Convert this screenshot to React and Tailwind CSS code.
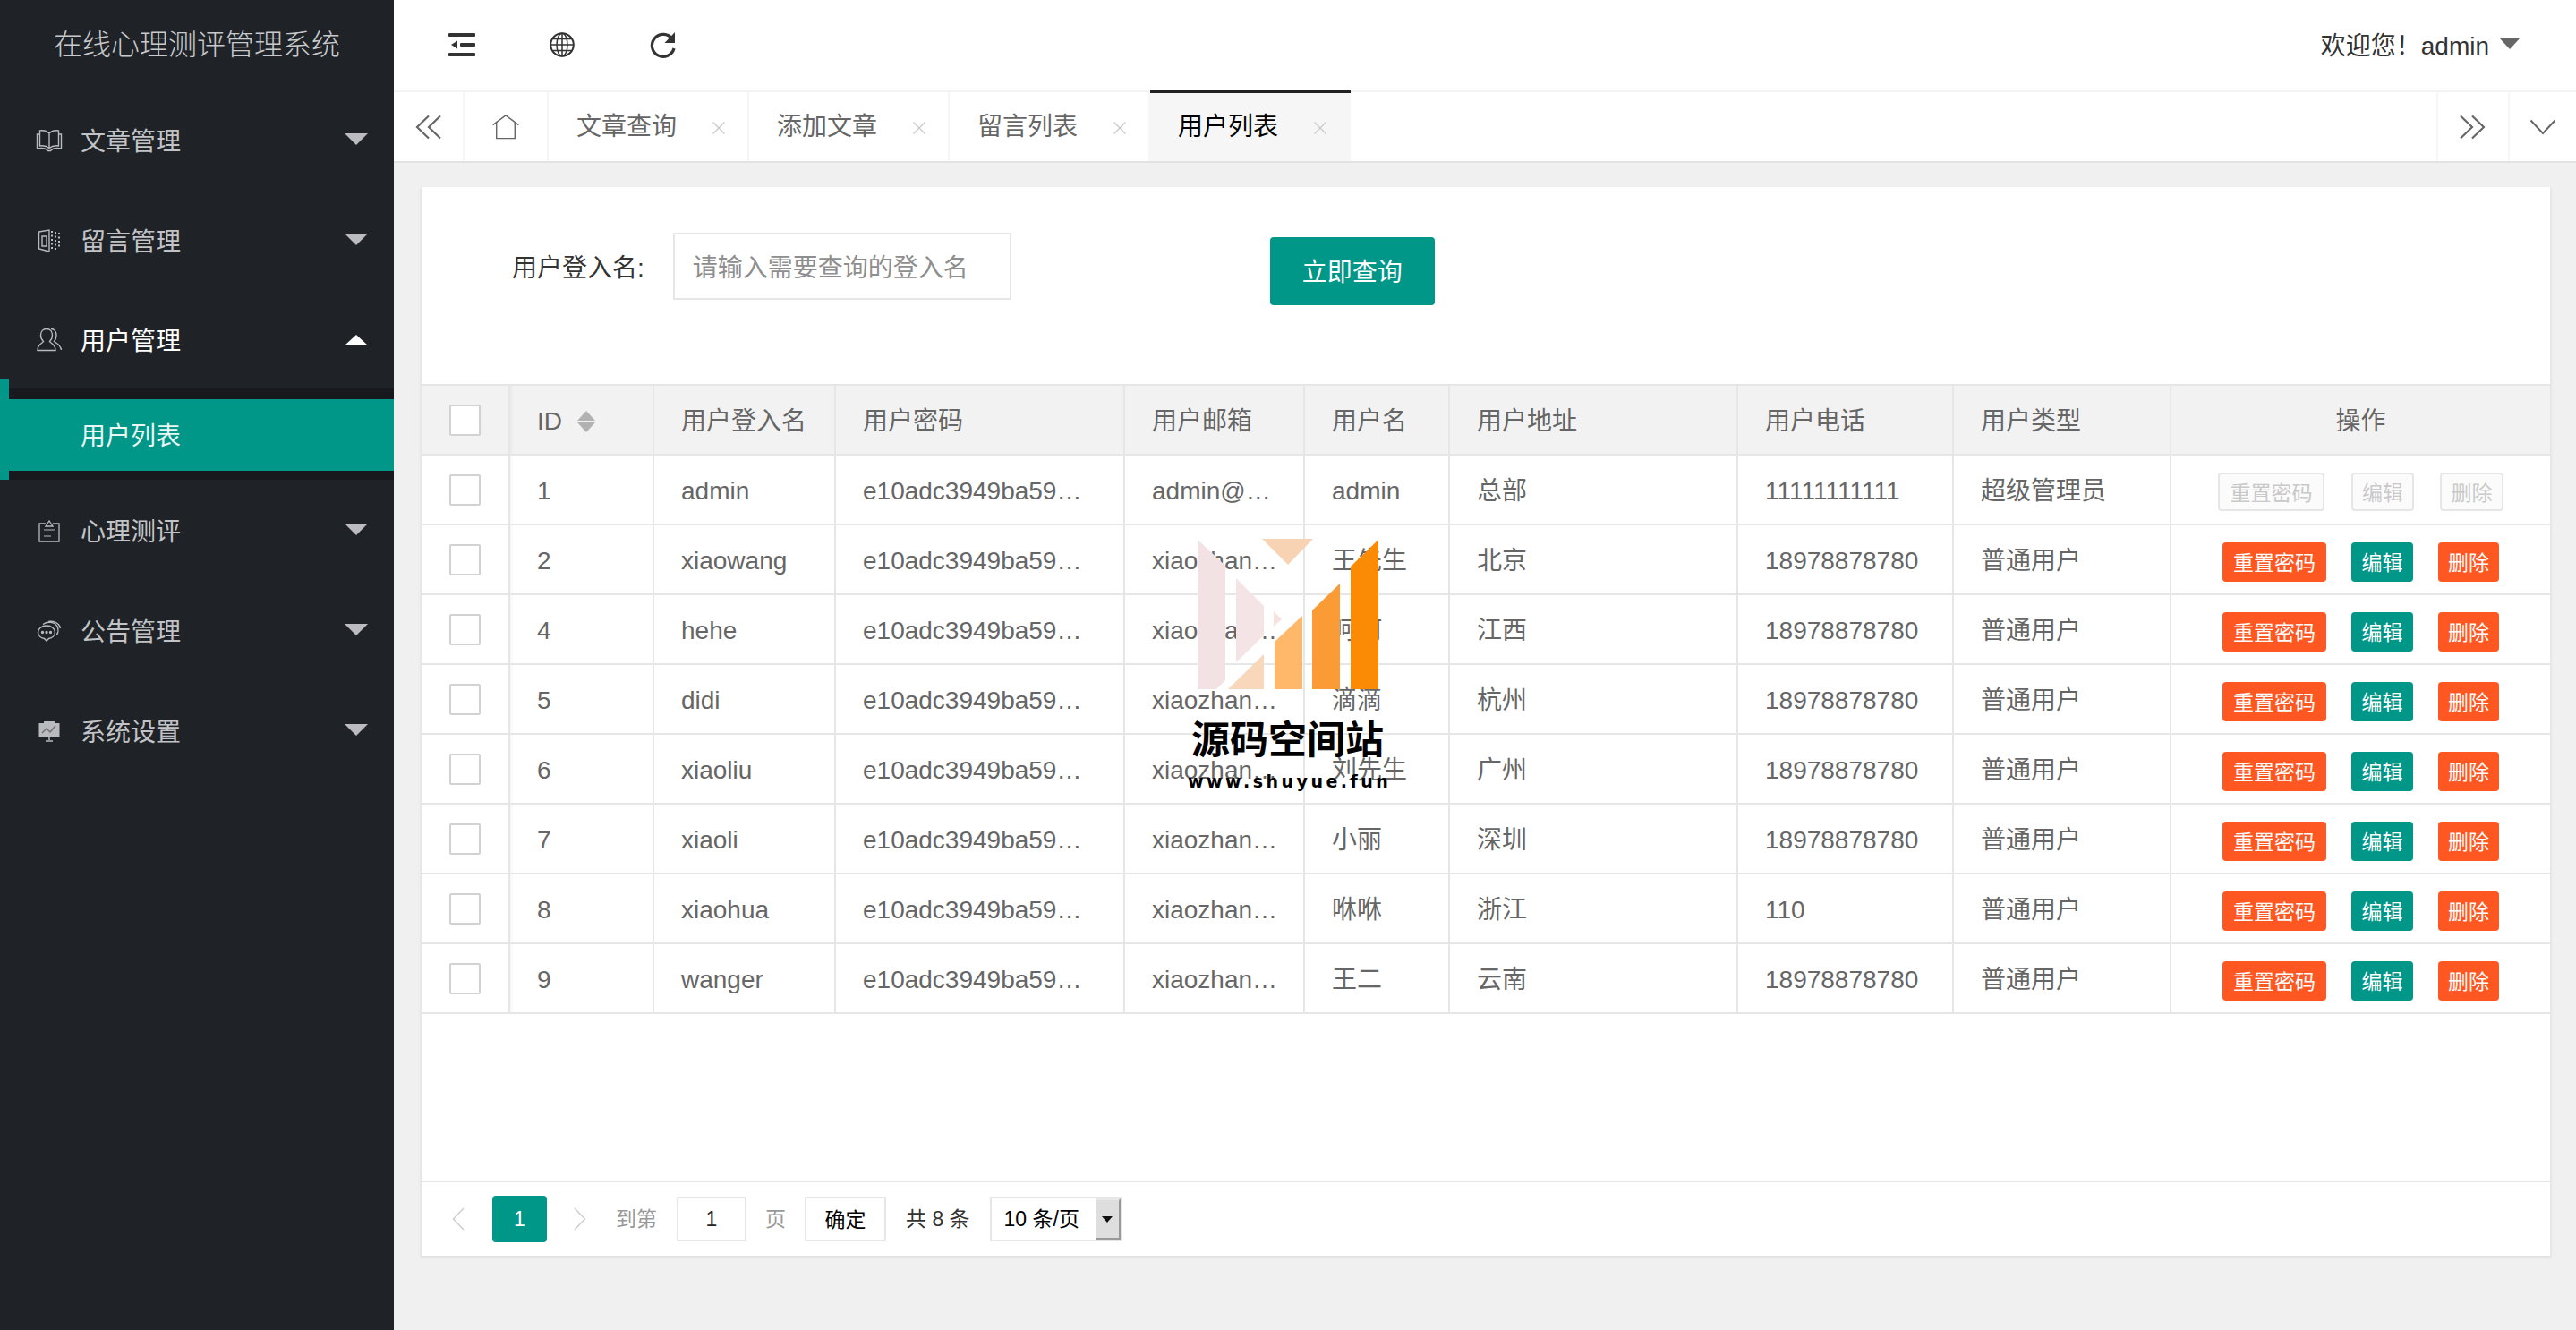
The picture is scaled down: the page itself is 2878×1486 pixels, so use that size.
import React from "react";

const stroke = "#b9babd";
const BookIcon = () => (
  <svg width="30" height="26" viewBox="0 0 30 26" fill="none" stroke={stroke} strokeWidth="1.4">
    <path d="M15 5C12 2 8 1.500 4.500 2V19C8 18.500 12 19 15 21.500C18 19 22 18.500 25.500 19V2C22 1.500 18 2 15 5V21.500" />
    <path d="M4.500 6H1.500V22C6 21 11 21.500 13.500 24.500H16.500C19 21.500 24 21 28.500 22V6H25.500" />
  </svg>
);
const DoorIcon = () => (
  <svg width="26" height="26" viewBox="0 0 26 26" fill="none" stroke={stroke} strokeWidth="1.4">
    <path d="M1.500 3L13 1V25L1.500 22V3Z" />
    <path d="M5 8H10V19H5V8Z" />
    <path d="M16 2V24M20 3V23M24 4V22" strokeDasharray="2 2.500" strokeWidth="2" />
  </svg>
);
const UserIcon = () => (
  <svg width="29" height="27" viewBox="0 0 29 27" fill="none" stroke={stroke} strokeWidth="1.4">
    <path d="M11 1.500C15 1.500 17.500 4.500 17.500 8.500C17.500 12 16 14 14.500 15.500C16 18 21 18.500 21 25.500H1C1 18.500 6 18 7.500 15.500C6 14 4.500 12 4.500 8.500C4.500 4.500 7 1.500 11 1.500Z" />
    <path d="M16 1.500C20 1.500 22 5 22 8.500C22 12 21 14 19.500 15.500C21.500 17.500 26.500 18.500 27.500 25" />
  </svg>
);
const ClipIcon = () => (
  <svg width="24" height="25" viewBox="0 0 24 25" fill="none" stroke={stroke} strokeWidth="1.3">
    <path d="M8 4H1V24H23V4H16" />
    <path d="M8 7L12 1L16 7H8Z" />
    <path d="M6 11H18M6 14.500H18M6 18H14" strokeWidth="1.200" />
  </svg>
);
const ChatIcon = () => (
  <svg width="28" height="24" viewBox="0 0 28 24" fill="none" stroke={stroke} strokeWidth="1.5">
    <path d="M11 6C5.500 6 1.500 9.500 1.500 13.500C1.500 17.500 5 20 8.500 20.500L11 23L13.500 20.500C17 20 20.500 17.500 20.500 13.500C20.500 9.500 16.500 6 11 6Z" />
    <path d="M7 4.500C12 1 20 1.500 23 7C24.500 10 24 14 22.500 16" />
    <path d="M13 1.500C18 0.500 25 2.500 26.500 9" />
    <circle cx="6.500" cy="13.500" r="0.900" fill={stroke} />
    <circle cx="11" cy="13.500" r="0.900" fill={stroke} />
    <circle cx="15.500" cy="13.500" r="0.900" fill={stroke} />
  </svg>
);
const BoardIcon = () => (
  <svg width="24" height="23" viewBox="0 0 24 23" fill="none">
    <rect x="6" y="0" width="12" height="2" fill={stroke} />
    <rect x="0.500" y="2" width="23" height="15" fill={stroke} />
    <path d="M4 13L9 8L13 12L19 5" stroke="#6d6f73" strokeWidth="1.400" />
    <path d="M12 17V21M8 22H16" stroke={stroke} strokeWidth="1.500" />
  </svg>
);

const Down = () => <span className="ml-auto mr-[29px] mb-[3px] h-0 w-0 border-x-[13px] border-t-[13px] border-x-transparent border-t-[#bcbcc0]" />;
const Up = () => <span className="ml-auto mr-[29px] h-0 w-0 border-x-[13px] border-b-[12px] border-x-transparent border-b-white" />;

function MenuItem({ icon, label, active, className }) {
  return (
    <div className={`flex items-center text-[28px] ${active ? "text-white" : "text-[#c2c3c6]"} ${className || "h-[112px]"}`}>
      <span className="ml-[40px] flex w-[30px] items-center justify-center">{icon}</span>
      <span className="ml-[20px] pt-[4px]">{label}</span>
      {active ? <Up /> : <Down />}
    </div>
  );
}

const Chevrons = ({ dir }) => (
  <svg width="30" height="28" viewBox="0 0 30 28" fill="none" stroke="#666" strokeWidth="2.200">
    {dir === "left" ? <path d="M15 1.500L2 14L15 26.500M28 1.500L15 14L28 26.500" /> : <path d="M2 1.500L15 14L2 26.500M15 1.500L28 14L15 26.500" />}
  </svg>
);

function TabClose() {
  return (
    <svg className="ml-[39px] mt-[2px]" width="16" height="14" viewBox="0 0 16 14" fill="none" stroke="#c9c9c9" strokeWidth="1.300">
      <path d="M1.500 0.500L14.500 13.500M14.500 0.500L1.500 13.500" />
    </svg>
  );
}

function Tab({ label, active }) {
  return (
    <div className={`flex h-[80px] w-[224px] shrink-0 items-center pl-[31px] text-[28px] ${active ? "border-t-[4px] border-t-[#222] bg-[#f6f6f6] text-black" : "border-t-[3px] border-t-[#f3f3f3] border-r-2 border-r-[#f6f6f6] text-[#666]"}`}>
      <span>{label}</span>
      <TabClose />
    </div>
  );
}

const IconTab = ({ w, children, left }) => (
  <div className={`flex h-[80px] shrink-0 items-center justify-center border-t-[3px] border-t-[#f3f3f3] ${left ? "border-l-2 border-l-[#f6f6f6]" : "border-r-2 border-r-[#f6f6f6]"} ${w}`}>{children}</div>
);

const Checkbox = () => <span className="mx-auto block h-[35px] w-[35px] rounded-[2px] border-2 border-[#d2d2d2] bg-white" />;

const rows = [
  ["1", "admin", "admin@…", "admin", "总部", "11111111111", "超级管理员"],
  ["2", "xiaowang", "xiaozhan…", "王先生", "北京", "18978878780", "普通用户"],
  ["4", "hehe", "xiaozhan…", "呵呵", "江西", "18978878780", "普通用户"],
  ["5", "didi", "xiaozhan…", "滴滴", "杭州", "18978878780", "普通用户"],
  ["6", "xiaoliu", "xiaozhan…", "刘先生", "广州", "18978878780", "普通用户"],
  ["7", "xiaoli", "xiaozhan…", "小丽", "深圳", "18978878780", "普通用户"],
  ["8", "xiaohua", "xiaozhan…", "咻咻", "浙江", "110", "普通用户"],
  ["9", "wanger", "xiaozhan…", "王二", "云南", "18978878780", "普通用户"],
];

const th = "h-[78px] border-2 border-l-0 border-[#e6e6e6] pl-[30px] pt-[4px] text-left text-[28px] font-normal text-[#666]";
const td = "h-[78px] border-2 border-l-0 border-[#e6e6e6] pl-[30px] pt-[4px] text-[28px] text-[#666] whitespace-nowrap";

function Actions({ disabled }) {
  if (disabled) {
    const b = "flex h-[43px] items-center justify-center rounded-[4px] border-2 border-[#e6e6e6] bg-[#fbfbfb] pt-[3px] text-[23px] text-[#c9c9c9]";
    return (
      <div className="flex pl-[52px] pt-[5px]">
        <span className={`${b} w-[119px]`}>重置密码</span>
        <span className={`${b} ml-[30px] w-[70px]`}>编辑</span>
        <span className={`${b} ml-[29px] w-[71px]`}>删除</span>
      </div>
    );
  }
  const b = "flex h-[44px] items-center justify-center rounded-[4px] pt-[3px] text-[23px] text-white";
  return (
    <div className="flex pl-[57px] pt-[6px]">
      <span className={`${b} w-[116px] bg-[#ff5722]`}>重置密码</span>
      <span className={`${b} ml-[28px] w-[69px] bg-[#009688]`}>编辑</span>
      <span className={`${b} ml-[28px] w-[68px] bg-[#ff5722]`}>删除</span>
    </div>
  );
}

export default function App() {
  return (
    <div className="relative flex h-[1486px] w-[2878px] overflow-hidden bg-[#f0f0f0] [font-family:Liberation_Sans,Noto_Sans_CJK_SC,sans-serif]">
      <aside className="w-[440px] shrink-0 bg-[#1f2328]">
        <div className="flex h-[101px] items-center justify-center bg-[#1f2328] pb-[2px] text-[32px] font-light text-[#c8c9cb]">在线心理测评管理系统</div>
        <MenuItem icon={<BookIcon />} label="文章管理" />
        <MenuItem icon={<DoorIcon />} label="留言管理" />
        <MenuItem icon={<UserIcon />} label="用户管理" active className="h-[109px]" />
        <div className="relative h-[102px] bg-[#18191f] pt-[12px]">
          <span className="absolute -top-[10px] bottom-0 left-0 w-[10px] bg-[#009688]" />
          <div className="flex h-[80px] items-center bg-[#009688] pl-[90px] pt-[4px] text-[28px] text-[#e9f6f4]">用户列表</div>
        </div>
        <MenuItem icon={<ClipIcon />} label="心理测评" className="mt-[1px] h-[112px]" />
        <MenuItem icon={<ChatIcon />} label="公告管理" />
        <MenuItem icon={<BoardIcon />} label="系统设置" />
      </aside>

      <main className="flex min-w-0 flex-1 flex-col">
        <header className="flex h-[100px] shrink-0 items-center bg-white">
          <svg className="ml-[61px]" width="30" height="28" viewBox="0 0 30 28" fill="#333">
            <rect x="0" y="1" width="30" height="4" rx="1" />
            <rect x="13" y="12" width="17" height="4" rx="1" />
            <rect x="0" y="23" width="30" height="4" rx="1" />
            <path d="M3 14L10 9.500V18.500Z" />
          </svg>
          <svg className="ml-[83px]" width="28" height="28" viewBox="0 0 28 28" fill="none" stroke="#333" strokeWidth="1.500">
            <circle cx="14" cy="14" r="12.800" strokeWidth="2" />
            <ellipse cx="14" cy="14" rx="6" ry="12.800" />
            <path d="M14 1V27M1.500 14H26.500M3.500 7.500H24.500M3.500 20.500H24.500" />
          </svg>
          <svg className="ml-[83px]" width="32" height="32" viewBox="0 0 32 32" fill="none" stroke="#333" strokeWidth="3.200">
            <path d="M26 9.500A12.500 12.500 0 1 0 28 20" />
            <path d="M29 2V14H17.500Z" fill="#333" stroke="none" />
          </svg>
          <div className="ml-auto mr-[62px] flex items-center text-[28px] text-[#333]">
            <span className="pt-[4px]">欢迎您！admin</span>
            <span className="ml-[11px] mb-[4px] h-0 w-0 border-x-[12px] border-t-[13px] border-x-transparent border-t-[#666]" />
          </div>
        </header>

        <nav className="flex h-[82px] shrink-0 border-b-2 border-b-[#e2e2e2] bg-white">
          <IconTab w="w-[79px]"><Chevrons dir="left" /></IconTab>
          <IconTab w="w-[94px]">
            <svg width="32" height="28" viewBox="0 0 34 30" fill="none" stroke="#666" strokeWidth="1.500">
              <path d="M1.500 12.500L17 1L32.500 12.500" />
              <path d="M6 9V28.500H28V9" />
            </svg>
          </IconTab>
          <Tab label="文章查询" />
          <Tab label="添加文章" />
          <Tab label="留言列表" />
          <Tab label="用户列表" active />
          <div className="h-[80px] flex-1 border-t-[3px] border-t-[#f3f3f3]" />
          <IconTab w="w-[80px] pr-[3px]" left><Chevrons dir="right" /></IconTab>
          <IconTab w="w-[76px]" left>
            <svg width="30" height="18" viewBox="0 0 30 18" fill="none" stroke="#666" strokeWidth="2">
              <path d="M1.500 1.500L15 16L28.500 1.500" />
            </svg>
          </IconTab>
        </nav>

        <section className="ml-[30px] mt-[27px] w-[2380px] border-x border-x-[#e6e6e6] bg-white shadow-[0_2px_3px_rgba(0,0,0,0.08)]">
          <div className="flex h-[220px] items-start pl-[101px] pt-[51px]">
            <label className="flex h-[75px] items-center pt-[4px] text-[28px] text-[#333]">用户登入名:</label>
            <div className="ml-[32px] flex h-[75px] w-[378px] items-center border-2 border-[#e6e6e6] pl-[20px] pt-[4px] text-[28px] text-[#8e8e8e]">请输入需要查询的登入名</div>
            <button className="ml-[289px] mt-[5px] flex h-[76px] w-[184px] items-center justify-center rounded-[4px] bg-[#009688] pt-[4px] text-[28px] text-white">立即查询</button>
          </div>

          <div className="h-[890px]">
            <table className="w-full table-fixed border-collapse">
              <colgroup>
                <col className="w-[98px]" />
                <col className="w-[161px]" />
                <col className="w-[203px]" />
                <col className="w-[323px]" />
                <col className="w-[201px]" />
                <col className="w-[162px]" />
                <col className="w-[322px]" />
                <col className="w-[241px]" />
                <col className="w-[243px]" />
                <col className="w-[424px]" />
              </colgroup>
              <thead>
                <tr className="bg-[#f2f2f2]">
                  <th className="h-[78px] border-2 border-l-0 border-[#e6e6e6] shadow-[3px_0_3px_rgba(0,0,0,0.04)]"><Checkbox /></th>
                  <th className={th}>
                    <span className="flex items-center">
                      ID
                      <span className="ml-[17px] flex flex-col items-center gap-[2px]">
                        <span className="h-0 w-0 border-x-[10px] border-b-[11px] border-x-transparent border-b-[#b2b2b2]" />
                        <span className="h-0 w-0 border-x-[10px] border-t-[11px] border-x-transparent border-t-[#b2b2b2]" />
                      </span>
                    </span>
                  </th>
                  <th className={th}>用户登入名</th>
                  <th className={th}>用户密码</th>
                  <th className={th}>用户邮箱</th>
                  <th className={th}>用户名</th>
                  <th className={th}>用户地址</th>
                  <th className={th}>用户电话</th>
                  <th className={th}>用户类型</th>
                  <th className="h-[78px] border-2 border-x-0 border-[#e6e6e6] pt-[4px] text-center text-[28px] font-normal text-[#666]">操作</th>
                </tr>
              </thead>
              <tbody>
                {rows.map((r) => (
                  <tr key={r[0]}>
                    <td className="h-[78px] border-2 border-l-0 border-[#e6e6e6] shadow-[3px_0_3px_rgba(0,0,0,0.04)]"><Checkbox /></td>
                    <td className={td}>{r[0]}</td>
                    <td className={td}>{r[1]}</td>
                    <td className={td}>e10adc3949ba59…</td>
                    <td className={td}>{r[2]}</td>
                    <td className={td}>{r[3]}</td>
                    <td className={td}>{r[4]}</td>
                    <td className={td}>{r[5]}</td>
                    <td className={td}>{r[6]}</td>
                    <td className="h-[78px] border-2 border-x-0 border-[#e6e6e6]"><Actions disabled={r[0] === "1"} /></td>
                  </tr>
                ))}
              </tbody>
            </table>
          </div>

          <div className="flex h-[84px] items-center border-t-2 border-t-[#e6e6e6] text-[23px]">
            <svg className="ml-[34px]" width="14" height="26" viewBox="0 0 14 26" fill="none" stroke="#cfcfcf" strokeWidth="1.600">
              <path d="M13 1L1.500 13L13 25" />
            </svg>
            <span className="ml-[31px] flex h-[52px] w-[61px] items-center justify-center rounded-[4px] bg-[#009688] text-white">1</span>
            <svg className="ml-[30px]" width="14" height="26" viewBox="0 0 14 26" fill="none" stroke="#cfcfcf" strokeWidth="1.600">
              <path d="M1 1L12.500 13L1 25" />
            </svg>
            <span className="ml-[33px] text-[#999]">到第</span>
            <span className="ml-[22px] flex h-[50px] w-[78px] items-center justify-center border-2 border-[#e6e6e6] text-[#222]">1</span>
            <span className="ml-[21px] text-[#999]">页</span>
            <span className="ml-[21px] flex h-[50px] w-[91px] items-center justify-center border-2 border-[#e6e6e6] pt-[3px] text-black">确定</span>
            <span className="ml-[22px] text-[#333]">共 8 条</span>
            <div className="ml-[22px] flex h-[50px] w-[148px] items-center border-2 border-[#e6e6e6] pl-[14px] text-black">
              <span>10 条/页</span>
              <span className="ml-auto flex h-full w-[28px] items-center justify-center border-y-2 border-r-2 border-t-[#e8e8e8] border-r-[#999] border-b-[#999] bg-[#dedede]">
                <span className="h-0 w-0 border-x-[6px] border-t-[7px] border-x-transparent border-t-[#111]" />
              </span>
            </div>
          </div>
        </section>
      </main>

      {/* watermark overlay */}
      <svg className="absolute left-[1330px] top-[595px]" width="220" height="185" viewBox="1330 595 220 185">
        <path d="M1338 603L1369 632V760L1359 770H1338Z" fill="#f3e2e4" />
        <path d="M1381 646L1412 677V710L1381 740Z" fill="#f4e4e6" />
        <path d="M1423 683L1432 692L1423 700Z" fill="#f6e3df" />
        <path d="M1410 602H1467L1439 631Z" fill="#f7d3b3" />
        <path d="M1372 770L1412 731V770Z" fill="#f9d7bb" />
        <path d="M1424 770V717L1455 688V770Z" fill="#ffb769" />
        <path d="M1466 770V682L1497 652V770Z" fill="#fb9b35" />
        <path d="M1509 770V633L1540 603V770Z" fill="#fb8a05" />
      </svg>
      <div className="absolute left-[1331px] top-[799px] whitespace-nowrap text-[43px] font-bold leading-[56px] text-black">源码空间站</div>
      <div className="absolute left-[1327px] top-[858px] whitespace-nowrap text-[19px] font-bold leading-[30px] tracking-[3.500px] text-black [font-family:DejaVu_Sans,sans-serif]">www.shuyue.fun</div>
    </div>
  );
}
